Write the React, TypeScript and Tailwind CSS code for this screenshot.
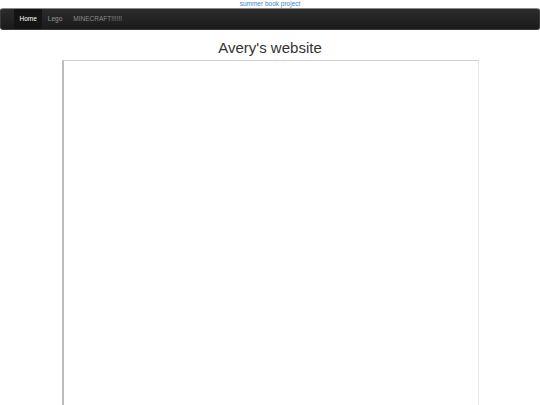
import React from "react";

export default function App() {
  return (
    <div className="w-[540px] h-[405px] overflow-hidden bg-white" style={{ fontFamily: '"Liberation Sans", Arial, sans-serif' }}>
      <div className="h-[8px] flex justify-center items-center text-[6.5px] leading-[8px] text-[#3a87c8]">
        summer book project
      </div>
      <div className="h-[22px] rounded-[3px] border border-[#3a3a3a] border-t-[#8a8a8a] bg-gradient-to-b from-[#2c2c2c] to-[#1a1a1a] flex items-stretch pl-[13px]">
        <div className="flex items-center px-[5.5px] bg-[#141414] text-white text-[6.5px]">Home</div>
        <div className="flex items-center px-[5.5px] text-[#9a9a9a] text-[6.5px]">Lego</div>
        <div className="flex items-center px-[5.5px] text-[#8a8a8a] text-[6.5px]">MINECRAFT!!!!!!</div>
      </div>
      <div className="pt-[8px] pb-[2px] h-[30px] text-center text-[15px] leading-[20px] text-[#333]">
        Avery's website
      </div>
      <div className="mx-auto w-[417px] h-[400px] border-t border-t-[#d0d0d0] border-l-2 border-l-[#bdbdbd] border-r border-r-[#e8e8e8]" />
    </div>
  );
}
